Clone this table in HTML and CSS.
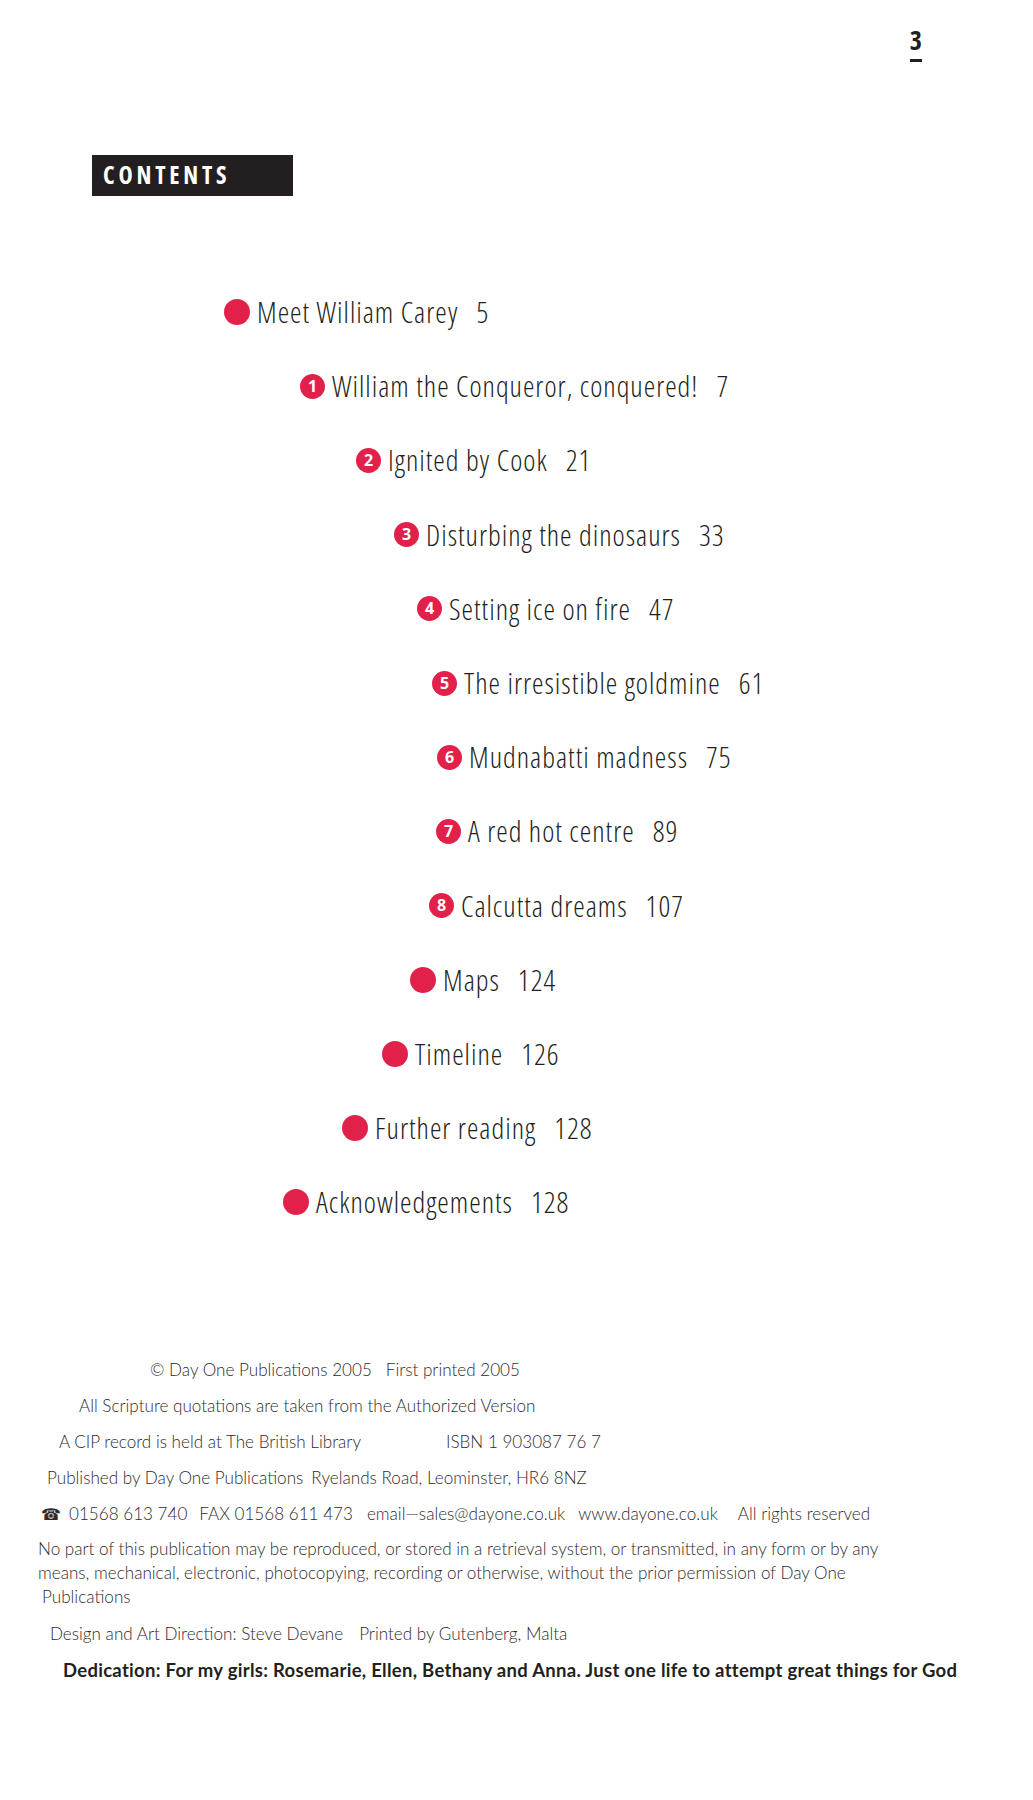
FILE: index.html
```html
<!DOCTYPE html>
<html lang="en">
<head>
<meta charset="utf-8">
<title>Contents</title>
<link rel="stylesheet" href="styles.css">
</head>
<body>
<div class="page">
  <header class="folio"><span class="pnum">3</span></header>

  <div class="contents-tag">CONTENTS</div>

  <ol class="toc">
    <li class="entry e0"><span class="dot"></span><span class="title">Meet William Carey</span><span class="pg">5</span></li>
    <li class="entry e1"><span class="num">1</span><span class="title">William the Conqueror, conquered!</span><span class="pg">7</span></li>
    <li class="entry e2"><span class="num">2</span><span class="title">Ignited by Cook</span><span class="pg">21</span></li>
    <li class="entry e3"><span class="num">3</span><span class="title">Disturbing the dinosaurs</span><span class="pg">33</span></li>
    <li class="entry e4"><span class="num">4</span><span class="title">Setting ice on fire</span><span class="pg">47</span></li>
    <li class="entry e5"><span class="num">5</span><span class="title">The irresistible goldmine</span><span class="pg">61</span></li>
    <li class="entry e6"><span class="num">6</span><span class="title">Mudnabatti madness</span><span class="pg">75</span></li>
    <li class="entry e7"><span class="num">7</span><span class="title">A red hot centre</span><span class="pg">89</span></li>
    <li class="entry e8"><span class="num">8</span><span class="title">Calcutta dreams</span><span class="pg">107</span></li>
    <li class="entry e9"><span class="dot"></span><span class="title">Maps</span><span class="pg">124</span></li>
    <li class="entry e10"><span class="dot"></span><span class="title">Timeline</span><span class="pg">126</span></li>
    <li class="entry e11"><span class="dot"></span><span class="title">Further reading</span><span class="pg">128</span></li>
    <li class="entry e12"><span class="dot"></span><span class="title">Acknowledgements</span><span class="pg">128</span></li>
  </ol>

  <footer class="imprint">
    <p class="line l1"><span>© Day One Publications 2005</span><span class="g1">First printed 2005</span></p>
    <p class="line l2">All Scripture quotations are taken from the Authorized Version</p>
    <p class="line l3"><span>A CIP record is held at The British Library</span><span class="g3">ISBN 1 903087 76 7</span></p>
    <p class="line l4"><span>Published by Day One Publications</span><span class="g4">Ryelands Road, Leominster, HR6 8NZ</span></p>
    <p class="line l5"><span class="phone">☎</span><span class="g5a">01568 613 740</span><span class="g5b">FAX 01568 611 473</span><span class="g5c">email—sales@dayone.co.uk</span><span class="g5d">www.dayone.co.uk</span><span class="g5e">All rights reserved</span></p>
    <p class="line l6">No part of this publication may be reproduced, or stored in a retrieval system, or transmitted, in any form or by any<br>means, mechanical, electronic, photocopying, recording or otherwise, without the prior permission of Day One<br><span class="l6c">Publications</span></p>
    <p class="line l7"><span>Design and Art Direction: Steve Devane</span><span class="g7">Printed by Gutenberg, Malta</span></p>
    <p class="line l8">Dedication: For my girls: Rosemarie, Ellen, Bethany and Anna. Just one life to attempt great things for God</p>
  </footer>
</div>
</body>
</html>
```

FILE: styles.css
```css
html, body {
  margin: 0;
  padding: 0;
  background: #ffffff;
}

body {
  font-family: "Open Sans", "Liberation Sans", sans-serif;
  color: #231f20;
}

.page {
  width: 1033px;
  min-height: 1800px;
}

/* folio */
.folio {
  display: flex;
  justify-content: flex-end;
  padding-top: 28px;
  padding-right: 111px;
}

.pnum {
  font-weight: 700;
  font-stretch: 75%;
  font-size: 26px;
  line-height: 25px;
  padding-bottom: 6px;
  border-bottom: 3px solid #231f20;
}

/* contents tag */
.contents-tag {
  margin-top: 93px;
  margin-left: 92px;
  width: 201px;
  height: 41px;
  box-sizing: border-box;
  padding-left: 11px;
  background: #231f20;
  color: #ffffff;
  font-weight: 700;
  font-stretch: 75%;
  font-size: 24px;
  line-height: 39px;
  letter-spacing: 3.8px;
}

/* table of contents */
.toc {
  list-style: none;
  margin: 79px 0 0 0;
  padding: 0;
}

.entry {
  display: flex;
  align-items: center;
  height: 74.2px;
  font-size: 29px;
  font-weight: 300;
  font-stretch: 75%;
  letter-spacing: 1px;
  line-height: 40px;
  color: #231f20;
}

.dot {
  flex: none;
  width: 26px;
  height: 26px;
  border-radius: 50%;
  background: #e2214b;
  margin-right: 7px;
}

.num {
  flex: none;
  width: 25px;
  height: 25px;
  border-radius: 50%;
  background: #e2214b;
  margin-right: 7px;
  color: #ffffff;
  font-weight: 700;
  font-stretch: 100%;
  font-size: 16px;
  letter-spacing: 0;
  line-height: 25px;
  text-align: center;
}

.pg {
  margin-left: 18px;
}

.e0 { padding-left: 224px; }
.e1 { padding-left: 300px; }
.e2 { padding-left: 356px; }
.e3 { padding-left: 394px; }
.e4 { padding-left: 417px; }
.e5 { padding-left: 432px; }
.e6 { padding-left: 437px; }
.e7 { padding-left: 436px; }
.e8 { padding-left: 429px; }
.e9 { padding-left: 410px; }
.e10 { padding-left: 382px; }
.e11 { padding-left: 342px; }
.e12 { padding-left: 283px; }

/* imprint */
.imprint {
  margin-top: 119px;
  font-family: "Lato", "Open Sans", sans-serif;
  font-size: 17.1px;
  font-weight: 300;
  line-height: 24px;
  color: #2f2b2c;
}

.line {
  margin: 0 0 12px 0;
  white-space: nowrap;
}

.l1 { padding-left: 150px; }
.l2 { padding-left: 79px; }
.l3 { padding-left: 59px; }
.l4 { padding-left: 47px; }
.l5 { padding-left: 41px; }
.l6 { padding-left: 38px; margin-top: -2px; }
.l7 { padding-left: 50px; margin-top: 13px; }
.l8 {
  padding-left: 63px;
  font-weight: 700;
  font-size: 18.5px;
  letter-spacing: 0.28px;
  color: #231f20;
}

.l6c { padding-left: 4px; }

.g1 { margin-left: 14px; }
.g3 { margin-left: 85px; }
.g4 { margin-left: 8px; }
.g5a { margin-left: 8px; }
.g5b { margin-left: 12px; }
.g5c { margin-left: 14px; }
.g5d { margin-left: 13px; }
.g5e { margin-left: 20px; }
.g7 { margin-left: 16px; }

.phone {
  font-family: "DejaVu Sans", sans-serif;
  font-size: 16px;
}
```
